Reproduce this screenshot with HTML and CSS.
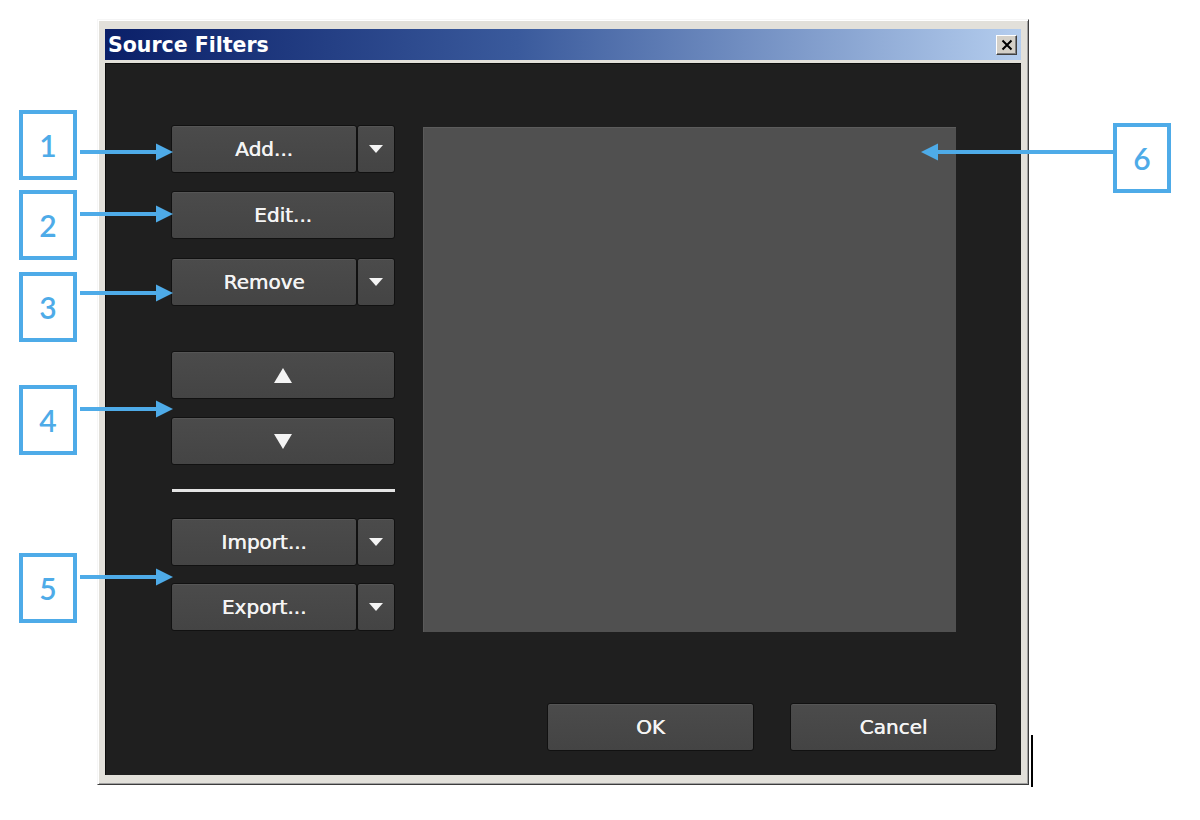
FILE: index.html
```html
<!DOCTYPE html>
<html lang="en">

<head>
    <meta charset="UTF-8">
    <meta name="viewport" content="width=device-width, initial-scale=1.0">
    <link rel="stylesheet" href="styles.css">
</head>

<body>
    <div id="stage">
        <div class="window">
            <div class="titlebar">
                <span class="title">Source Filters</span>
                <button class="close">
                    <svg width="12" height="12" viewBox="0 0 12 12" xmlns="http://www.w3.org/2000/svg">
                        <path d="M1.5 1.5L10.5 10.5M10.5 1.5L1.5 10.5" />
                    </svg>
                </button>
            </div>
            <div class="client">
                <div class="main">
                    <div class="tools">
                        <div class="split">
                            <button class="btn part">Add...</button>
                            <button class="btn drop"><svg width="14" height="8" viewBox="0 0 14 8"><path d="M0 0h14L7 8z" /></svg></button>
                        </div>
                        <button class="btn wide edit">Edit...</button>
                        <div class="split remove">
                            <button class="btn part">Remove</button>
                            <button class="btn drop"><svg width="14" height="8" viewBox="0 0 14 8"><path d="M0 0h14L7 8z" /></svg></button>
                        </div>
                        <button class="btn wide up"><svg width="18" height="15" viewBox="0 0 18 15"><path d="M9 0L18 15H0z" /></svg></button>
                        <button class="btn wide down"><svg width="18" height="15" viewBox="0 0 18 15"><path d="M0 0H18L9 15z" /></svg></button>
                        <div class="separator"></div>
                        <div class="split import">
                            <button class="btn part">Import...</button>
                            <button class="btn drop"><svg width="14" height="8" viewBox="0 0 14 8"><path d="M0 0h14L7 8z" /></svg></button>
                        </div>
                        <div class="split export">
                            <button class="btn part">Export...</button>
                            <button class="btn drop"><svg width="14" height="8" viewBox="0 0 14 8"><path d="M0 0h14L7 8z" /></svg></button>
                        </div>
                    </div>
                    <div class="listbox"></div>
                </div>
                <div class="footer">
                    <button class="btn dialog">OK</button>
                    <button class="btn dialog">Cancel</button>
                </div>
            </div>
        </div>

        <!-- callouts -->
        <div class="callout" style="left: 19px; top: 110px;">1</div>
        <div class="callout" style="left: 19px; top: 190px;">2</div>
        <div class="callout" style="left: 19px; top: 272px;">3</div>
        <div class="callout" style="left: 19px; top: 385px;">4</div>
        <div class="callout" style="left: 19px; top: 553px;">5</div>
        <div class="callout" style="left: 1113px; top: 123px;">6</div>

        <svg class="arrows" width="1200" height="820" viewBox="0 0 1200 820" xmlns="http://www.w3.org/2000/svg">
            <g class="arrow">
                <rect x="80" y="150" width="78" height="4" />
                <path d="M173 152L156 143.5V160.5z" />
            </g>
            <g class="arrow">
                <rect x="80" y="212" width="78" height="4" />
                <path d="M173 214L156 205.5V222.5z" />
            </g>
            <g class="arrow">
                <rect x="80" y="291" width="78" height="4" />
                <path d="M173 293L156 284.5V301.5z" />
            </g>
            <g class="arrow">
                <rect x="80" y="407" width="78" height="4" />
                <path d="M173 409L156 400.5V417.5z" />
            </g>
            <g class="arrow">
                <rect x="80" y="575" width="78" height="4" />
                <path d="M173 577L156 568.5V585.5z" />
            </g>
            <g class="arrow">
                <rect x="937" y="150" width="176" height="4" />
                <path d="M921 152L938 143.5V160.5z" />
            </g>
            <rect x="1031" y="735" width="2" height="52" fill="#000" />
        </svg>
    </div>
</body>

</html>
```

FILE: styles.css
```css
body {
    margin: 0;
    padding: 0;
    background: #ffffff;
    user-select: none;
}

#stage {
    height: 820px;
    overflow: hidden;
    position: relative;
    width: 1200px;
}

.window {
    background: #e2e0da;
    border: 1px solid;
    border-color: #f6f6f6 #3c3c3c #3c3c3c #f6f6f6;
    box-shadow: inset 1px 1px #ffffff, inset -1px -1px #a0a0a0;
    box-sizing: border-box;
    display: flex;
    flex-direction: column;
    height: 766px;
    margin: 19px 0 0 97px;
    padding: 9px 7px 9px 7px;
    width: 932px;
}

.titlebar {
    align-items: center;
    background: linear-gradient(to right, #0a1f68 0%, #3a5a9c 45%, #b4cdee 100%);
    display: flex;
    flex: none;
    height: 31px;
    padding: 0 4px 0 3px;
}

.title {
    color: #ffffff;
    flex: 1;
    font-family: "DejaVu Sans", sans-serif;
    font-size: 20.5px;
    font-weight: bold;
}

.close {
    align-items: center;
    background: #d4d0c8;
    border: 1px solid;
    border-color: #ffffff #404040 #404040 #ffffff;
    box-shadow: inset -1px -1px #808080;
    display: flex;
    height: 20px;
    justify-content: center;
    padding: 0;
    width: 21px;
}

.close svg path {
    stroke: #000000;
    stroke-width: 2;
}

.client {
    background: #1f1f1f;
    box-shadow: inset 1px 1px #0c0c0c;
    box-sizing: border-box;
    display: flex;
    flex-direction: column;
    height: 712px;
    margin-top: 3px;
    padding: 62px 24px 24px 66px;
}

.main {
    display: flex;
    gap: 28px;
    height: 507px;
}

.tools {
    display: flex;
    flex-direction: column;
    width: 224px;
}

.btn {
    align-items: center;
    background: linear-gradient(#4b4b4b, #444444);
    border: 1px solid #111111;
    border-radius: 3px;
    box-shadow: inset 0 1px #555555;
    box-sizing: border-box;
    color: #f4f4f4;
    display: flex;
    font-family: "DejaVu Sans", sans-serif;
    font-size: 20px;
    height: 48px;
    justify-content: center;
    padding: 0;
    text-shadow: 0.5px 0 0 #f4f4f4;
}

.btn svg path {
    fill: #f4f4f4;
}

.split {
    display: flex;
}

.split .part {
    width: 186px;
}

.split .drop {
    width: 38px;
}

.wide {
    width: 224px;
}

.edit {
    margin-top: 18px;
}

.remove {
    margin-top: 19px;
}

.up {
    margin-top: 45px;
}

.down {
    margin-top: 18px;
}

.separator {
    background: #e4e4e4;
    height: 3px;
    margin: 24px 0 0 1px;
}

.import {
    margin-top: 26px;
}

.export {
    margin-top: 17px;
}

.listbox {
    background: #505050;
    border-left: 1px solid #5a5a5a;
    border-top: 1px solid #5c5c5c;
    box-sizing: border-box;
    height: 505px;
    margin-top: 2px;
    width: 533px;
}

.footer {
    display: flex;
    gap: 36px;
    justify-content: flex-end;
    margin-top: 71px;
}

.dialog {
    width: 207px;
}

.callout {
    align-items: center;
    background: #ffffff;
    border: 4px solid #4eabe8;
    box-sizing: border-box;
    color: #4eabe8;
    display: flex;
    font-family: Lato, "Open Sans", sans-serif;
    font-size: 30px;
    font-weight: 600;
    height: 70px;
    justify-content: center;
    position: absolute;
    width: 58px;
}

.arrows {
    left: 0;
    pointer-events: none;
    position: absolute;
    top: 0;
}

.arrow rect,
.arrow path {
    fill: #4eabe8;
}
```
